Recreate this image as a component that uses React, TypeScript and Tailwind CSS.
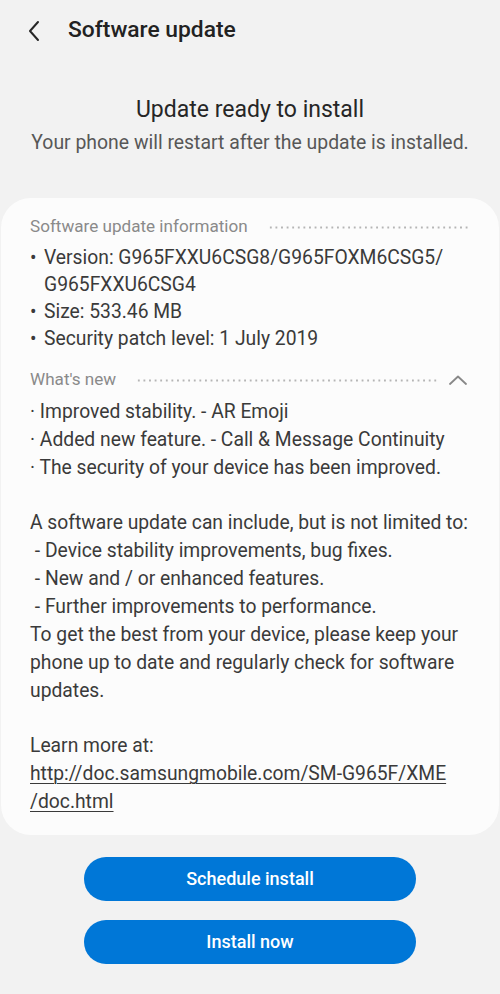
import React from "react";

const Dots = ({ cls }: { cls: string }) => (
  <div className={"flex-1 h-[3px] bg-[radial-gradient(circle,#b5b5b5_0.9px,transparent_1.3px)] bg-[length:5.6px_3px] bg-repeat-x " + cls} />
);

export default function App() {
  const font = { fontFamily: "Roboto, 'Noto Sans', sans-serif" };
  return (
    <div className="w-[500px] h-[994px] bg-[#f2f2f2] flex flex-col overflow-hidden" style={font}>
      <div className="h-[60px] flex items-center pl-[26px]">
        <svg width="16" height="22" viewBox="0 0 16 22" className="mt-[1px]">
          <path d="M12 2 L4 11 L12 20" fill="none" stroke="#262626" strokeWidth="2" strokeLinecap="round" strokeLinejoin="round" />
        </svg>
        <div className="ml-[26px] text-[22.8px] font-medium text-[#222]">Software update</div>
      </div>
      <div className="flex flex-col items-center mt-[35px]">
        <div className="text-[23px] text-[#262626] leading-[30px]">Update ready to install</div>
        <div className="text-[19.4px] text-[#575757] leading-[26px] mt-[5px]">Your phone will restart after the update is installed.</div>
      </div>
      <div className="mt-[42px] mx-[1px] bg-[#fcfcfc] rounded-[30px] pl-[29px] pr-[30px] pt-[17px] pb-[19px] text-[19.3px] leading-[27.86px] text-[#3a3a3a]">
        <div className="flex items-center h-[24px]">
          <div className="text-[17.1px] text-[#8a8a8a]">Software update information</div>
          <Dots cls="ml-5" />
        </div>
        <div className="mt-[5px] leading-[27px]">
          <div className="flex"><span className="w-[14px]">•</span><span>Version: G965FXXU6CSG8/G965FOXM6CSG5/<br />G965FXXU6CSG4</span></div>
          <div className="flex"><span className="w-[14px]">•</span><span>Size: 533.46 MB</span></div>
          <div className="flex"><span className="w-[14px]">•</span><span>Security patch level: 1 July 2019</span></div>
        </div>
        <div className="flex items-center h-[24px] mt-[16px]">
          <div className="text-[17.1px] text-[#8a8a8a]">What's new</div>
          <Dots cls="ml-5 mr-[12px]" />
          <svg width="18" height="10" viewBox="0 0 18 10" className="mr-[2px]">
            <path d="M1 9 L9 1.5 L17 9" fill="none" stroke="#888" strokeWidth="1.8" strokeLinecap="round" strokeLinejoin="round" />
          </svg>
        </div>
        <div className="mt-[6px]">
          <div>· Improved stability. - AR Emoji</div>
          <div>· Added new feature. - Call &amp; Message Continuity</div>
          <div>· The security of your device has been improved.</div>
          <div className="h-[27.86px]" />
          <div>A software update can include, but is not limited to:</div>
          <div>&nbsp;- Device stability improvements, bug fixes.</div>
          <div>&nbsp;- New and / or enhanced features.</div>
          <div>&nbsp;- Further improvements to performance.</div>
          <div>To get the best from your device, please keep your phone up to date and regularly check for software updates.</div>
          <div className="h-[27.86px]" />
          <div>Learn more at:</div>
          <div className="underline underline-offset-[3px] decoration-[1px]">http://doc.samsungmobile.com/SM-G965F/XME<br />/doc.html</div>
        </div>
      </div>
      <div className="flex flex-col items-center gap-[19px] mt-[22px]">
        <button className="w-[332px] h-[44px] rounded-full bg-[#0077d7] text-white text-[18px] font-medium">Schedule install</button>
        <button className="w-[332px] h-[44px] rounded-full bg-[#0077d7] text-white text-[18px] font-medium">Install now</button>
      </div>
    </div>
  );
}
